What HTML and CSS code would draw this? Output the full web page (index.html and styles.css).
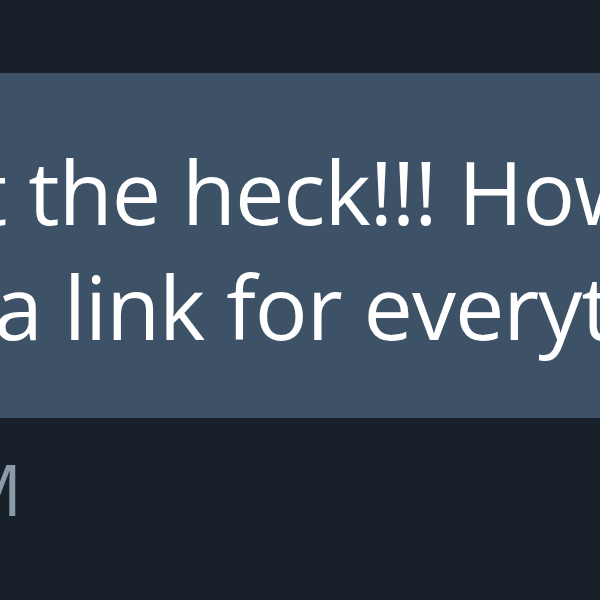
FILE: index.html
```html
<!DOCTYPE html>
<html>
<head>
<meta charset="utf-8">
<link rel="stylesheet" href="styles.css">
</head>
<body>
<div class="chat">
  <div class="bubble">
    <div class="line line-1">What the heck!!! How do</div>
    <div class="line line-2">you have a link for everything</div>
  </div>
  <div class="time">10:42 PM</div>
</div>
</body>
</html>
```

FILE: styles.css
```css
html, body {
  margin: 0;
  padding: 0;
  background: #18202a;
  width: 600px;
  height: 600px;
  overflow: hidden;
}
.chat {
  width: 600px;
  height: 600px;
  overflow: hidden;
  font-family: "Open Sans", "Noto Sans", sans-serif;
}
.bubble {
  margin-top: 73px;
  height: 345px;
  box-sizing: border-box;
  background: #3d5266;
  color: #ffffff;
  padding-top: 61px;
  font-size: 88px;
  line-height: 115px;
  letter-spacing: -1px;
  white-space: nowrap;
}
.line-1 {
  margin-left: -205px;
}
.line-2 {
  margin-left: -390px;
}
.time {
  margin-top: 30px;
  margin-left: -288px;
  color: #8b9aa8;
  font-size: 72px;
  line-height: 80px;
  white-space: nowrap;
}
```
